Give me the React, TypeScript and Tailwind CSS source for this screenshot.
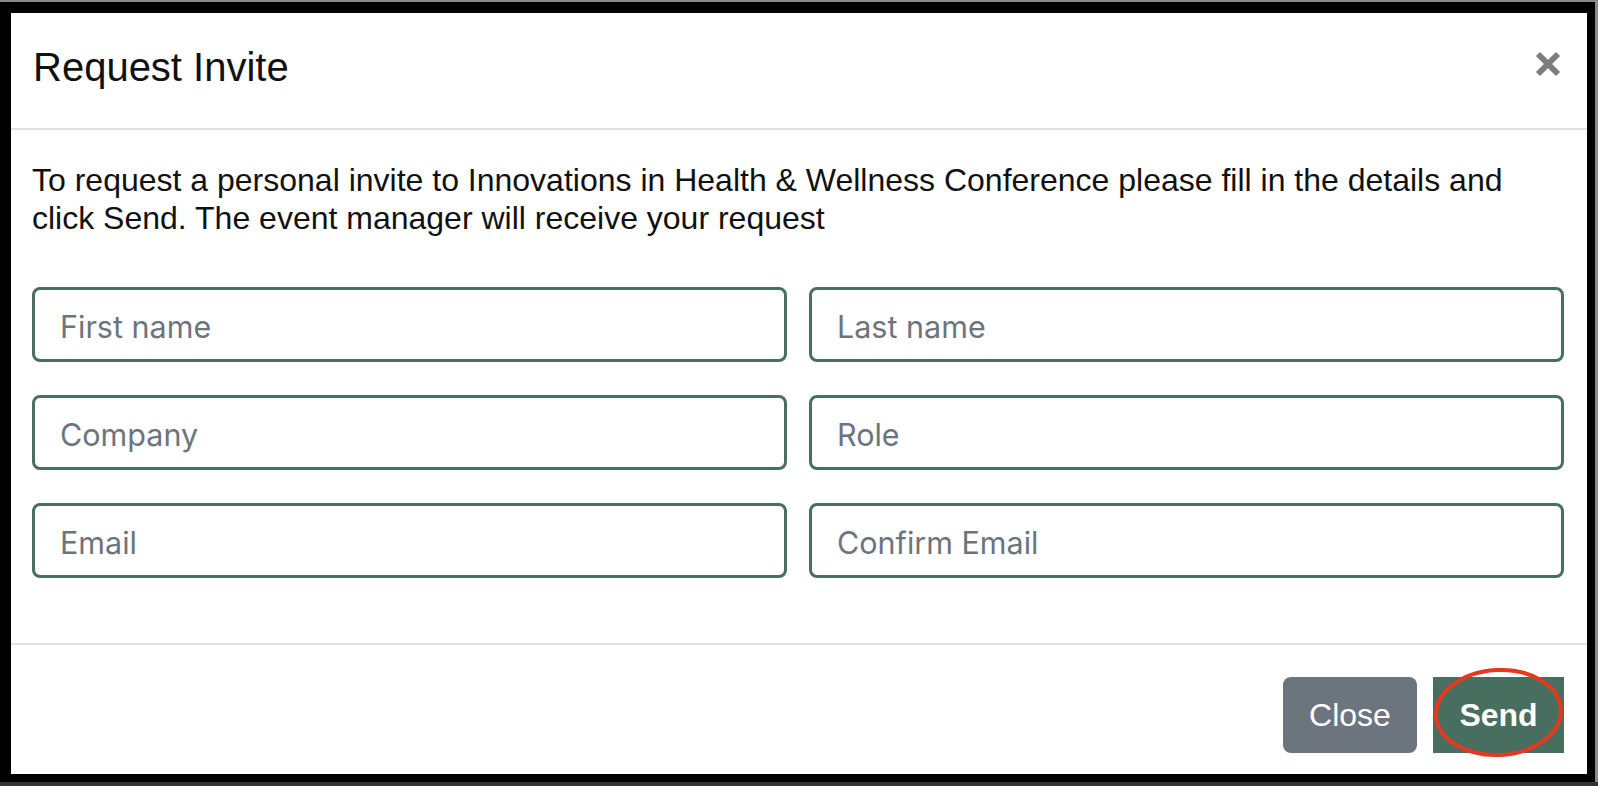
import React from "react";

const fields = [
  "First name",
  "Last name",
  "Company",
  "Role",
  "Email",
  "Confirm Email",
];

function CloseIcon() {
  return (
    <svg width="26" height="26" viewBox="0 0 26 26" className="mt-[8px] shrink-0">
      <path d="M3 3 L23 23 M23 3 L3 23" stroke="#7d7d7d" strokeWidth="6" strokeLinecap="butt" />
    </svg>
  );
}

export default function App() {
  return (
    <div className="w-[1598px] h-[786px] flex flex-col bg-[#2e3439] font-['Liberation_Sans',Arial,sans-serif]">
      <div className="h-[2px] bg-[#8a8a8a]" />
      <div className="flex h-[780px]">
        <div className="w-[1595px] h-[780px] border-l-[11px] border-t-[11px] border-r-[8px] border-b-[8px] border-black bg-white flex flex-col">
          {/* header */}
          <div className="h-[117px] shrink-0 border-b-2 border-[#dee2e6] flex justify-between items-start pl-[22px] pr-[26px] pt-[30px]">
            <h5 className="text-[40px] leading-[48px] text-[#111]">Request Invite</h5>
            <CloseIcon />
          </div>

          {/* body */}
          <div className="h-[513px] shrink-0 pt-[31px] pl-[21px] pr-[23px]">
            <p className="text-[32px] leading-[38.4px] text-[#111]">
              To request a personal invite to Innovations in Health &amp; Wellness Conference please fill in the details and click Send. The event manager will receive your request
            </p>
            <div className="grid grid-cols-2 gap-x-[22px] gap-y-[33px] mt-[49px]">
              {fields.map((f) => (
                <input
                  key={f}
                  placeholder={f}
                  className="h-[75px] w-full border-[3px] border-[#4a6f5f] rounded-[8px] pl-[25px] pr-4 pt-[4px] text-[30.5px] font-['Inter',sans-serif] text-[#495057] placeholder:text-[#6c757d] outline-none bg-white"
                />
              ))}
            </div>
          </div>

          {/* footer */}
          <div className="flex-1 border-t-2 border-[#dee2e6] flex justify-end items-start pt-[32px] pr-[23px] gap-[16px]">
            <button className="w-[134px] h-[76px] rounded-[8px] bg-[#6c757d] text-white text-[32px] leading-none">
              Close
            </button>
            <button className="relative w-[131px] h-[76px] bg-[#486e5f] text-white text-[32px] font-bold leading-none">
              Send
              <svg
                className="absolute left-[1px] -top-[9px] overflow-visible pointer-events-none"
                width="129"
                height="89"
                viewBox="0 0 129 89"
              >
                <ellipse
                  cx="64.5"
                  cy="44.5"
                  rx="62.5"
                  ry="42.5"
                  fill="none"
                  stroke="#e5391f"
                  strokeWidth="4"
                  transform="rotate(-3 64.5 44.5)"
                />
              </svg>
            </button>
          </div>
        </div>
        <div className="w-[3px] bg-[#8a8a8a]" />
      </div>
      <div className="h-[4px] bg-[#2e3439]" />
    </div>
  );
}
